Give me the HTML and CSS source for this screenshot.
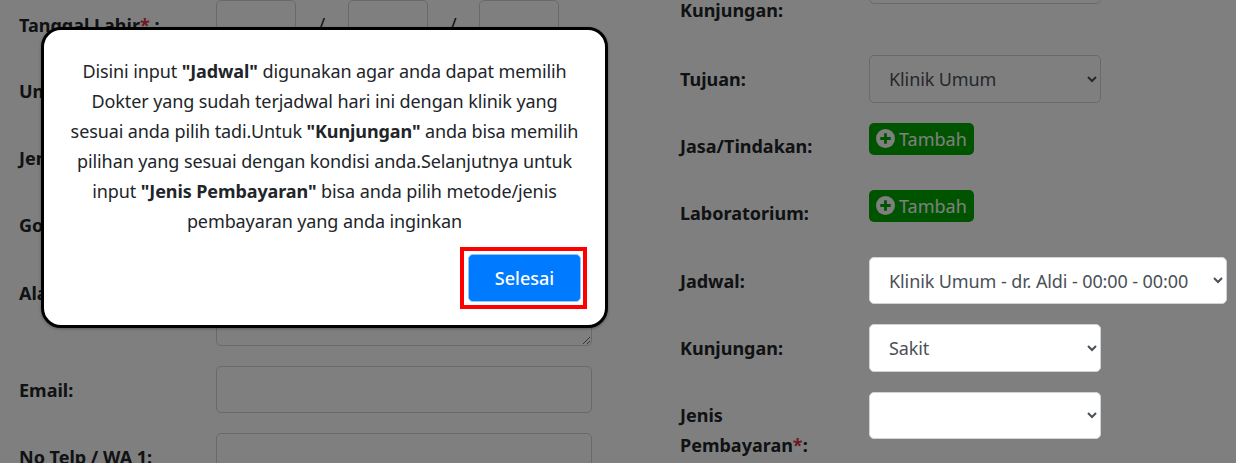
FILE: index.html
```html
<!DOCTYPE html>
<html lang="id">
<head>
<meta charset="utf-8">
<title>Pendaftaran</title>
<link rel="stylesheet" href="styles.css">
</head>
<body>
<main class="form">
  <section class="col col-left">
    <div class="row"><label class="lbl lbl-first">Tanggal Lahir<span class="req">*</span> :</label>
      <div class="dates"><input class="ctl date"><span class="sl">/</span><input class="ctl date"><span class="sl">/</span><input class="ctl date"></div></div>
    <div class="row"><label class="lbl">Umur:</label><input class="ctl wide"></div>
    <div class="row"><label class="lbl">Jenis Kelamin:</label><input class="ctl wide"></div>
    <div class="row"><label class="lbl">Golongan Darah:</label><input class="ctl wide"></div>
    <div class="row"><label class="lbl">Alamat:</label><textarea class="ctl wide area"></textarea></div>
    <div class="row"><label class="lbl">Email:</label><input class="ctl wide"></div>
    <div class="row"><label class="lbl">No Telp / WA 1:</label><input class="ctl wide"></div>
  </section>
  <section class="col col-right">
    <div class="row row-two"><label class="lbl">Jenis Kunjungan:</label><input class="ctl sel-w"></div>
    <div class="row"><label class="lbl">Tujuan:</label>
      <select class="ctl sel-w"><option>Klinik Umum</option></select></div>
    <div class="row"><label class="lbl">Jasa/Tindakan:</label><button class="add"><svg class="plus" viewBox="0 0 20 20"><circle cx="10" cy="10" r="10" fill="#fff"/><path d="M10 4.5v11M4.5 10h11" stroke="#00a800" stroke-width="3"/></svg>Tambah</button></div>
    <div class="row"><label class="lbl">Laboratorium:</label><button class="add"><svg class="plus" viewBox="0 0 20 20"><circle cx="10" cy="10" r="10" fill="#fff"/><path d="M10 4.5v11M4.5 10h11" stroke="#00a800" stroke-width="3"/></svg>Tambah</button></div>
    <div class="row"><label class="lbl">Jadwal:</label>
      <select class="ctl top jadwal"><option>Klinik Umum - dr. Aldi - 00:00 - 00:00</option></select></div>
    <div class="row"><label class="lbl">Kunjungan:</label>
      <select class="ctl top sel-w"><option>Sakit</option></select></div>
    <div class="row"><label class="lbl">Jenis Pembayaran<span class="req">*</span>:</label>
      <select class="ctl top sel-w"><option></option></select></div>
  </section>
</main>
<div class="overlay"></div>
<div class="modal">
  <p class="msg">Disini input <b>"Jadwal"</b> digunakan agar anda dapat memilih<br>Dokter yang sudah terjadwal hari ini dengan klinik yang<br>sesuai anda pilih tadi.Untuk <b>"Kunjungan"</b> anda bisa memilih<br>pilihan yang sesuai dengan kondisi anda.Selanjutnya untuk<br>input <b>"Jenis Pembayaran"</b> bisa anda pilih metode/jenis<br>pembayaran yang anda inginkan</p>
  <div class="actions"><div class="hl"><button class="done">Selesai</button></div></div>
</div>
</body>
</html>
```
FILE: styles.css
```css
* { box-sizing: border-box; }
html, body { margin: 0; height: 100%; overflow: hidden; }
body { background: #fff; color: #212529; font-family: "Noto Sans", sans-serif; font-size: 18px; line-height: 30px; position: relative; }
.form { display: flex; align-items: flex-start; padding-left: 19px; }
.col { display: flex; flex-direction: column; flex: none; gap: 20px; }
.col-left { width: 661px; }
.col-right { margin-top: -43.3px; }
.row { display: flex; align-items: flex-start; min-height: 47.3px; }
.row-two { min-height: 78.5px; }
.lbl { font-weight: 700; flex: none; width: 197px; padding-top: 8.5px; }
.lbl-first { padding-top: 10px; }
.col-right .lbl { width: 189px; padding-right: 45px; }
.req { color: #dc3545; }
.ctl { height: 47.3px; border: 1px solid #ced4da; border-radius: 5px; background: #fff; color: #495057; font: inherit; letter-spacing: -0.1px; padding: 0 15px; display: block; }
.wide { width: 376px; }
.dates { display: flex; align-items: center; }
.date { width: 80px; }
.sl { width: 51.5px; text-align: center; font-weight: 400; }
.area { height: 77px; resize: both; }
.sel-w { width: 232px; }
.jadwal { width: 358px; }
.top { position: relative; z-index: 3; }
.add { display: flex; align-items: center; gap: 4px; height: 32px; padding: 0 7px; border: 0; border-radius: 5px; background: #00a800; color: #fff; font: inherit; }
.plus { width: 19px; height: 19px; }
.overlay { position: absolute; inset: 0; background: rgba(0, 0, 0, .5); z-index: 2; }
.modal { position: absolute; left: 41px; top: 27px; width: 567px; height: 301px; background: #fff; border: 3px solid #000; border-radius: 20px; z-index: 4; padding: 26px 18px 0; box-shadow: 0 1px 3px rgba(0,0,0,.3); }
.msg { margin: 0; text-align: center; letter-spacing: -0.1px; }
.actions { display: flex; justify-content: flex-end; margin-top: 11px; }
.hl { border: 4px solid #f00; padding: 3px 2px 3px 4px; }
.done { display: block; width: 113px; height: 48px; border: 1px solid #8fc4ff; border-radius: 5px; background: #007bff; color: #fff; font: inherit; font-weight: 500; }
```
